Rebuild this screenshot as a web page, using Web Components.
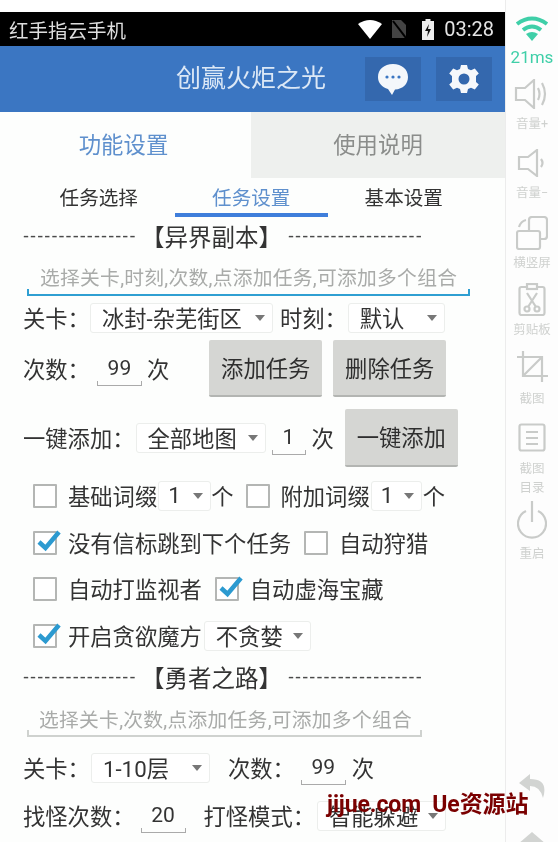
<!DOCTYPE html>
<html lang="zh"><head><meta charset="utf-8"><title>创赢火炬之光</title>
<style>
html,body{margin:0;padding:0;background:#fff}
body{width:558px;height:842px;overflow:hidden;font-family:Roboto,"Noto Sans CJK SC",sans-serif;color:#333}
x-row>span{margin-bottom:2px}
</style></head><body>
<x-app>
  <x-status>红手指云手机</x-status>
  <x-title>创赢火炬之光</x-title>
  <x-tabs></x-tabs>
  <x-subtabs></x-subtabs>

  <x-heading left="----------------" right="-------------------">【异界副本】</x-heading>
  <x-hint style="--h:39px;--line:#2f9fd2;--lw:443px;--pad:13px;--lh:2.5px;--mb:1px;--tl:44px">选择关卡,时刻,次数,点添加任务,可添加多个组合</x-hint>
  <x-row style="height:42px">
    <span>关卡：</span>
    <x-select style="width:183px">冰封-杂芜街区</x-select>
    <span style="margin-left:7px">时刻：</span>
    <x-select style="width:97px;margin-left:1px">默认</x-select>
  </x-row>
  <x-row style="height:59px">
    <span>次数：</span>
    <x-field style="width:45px;margin-left:7px">99</x-field>
    <span style="margin-left:5px">次</span>
    <x-btn style="width:113px;margin-left:40px">添加任务</x-btn>
    <x-btn style="width:113px;margin-left:11px">删除任务</x-btn>
  </x-row>
  <x-row style="height:64px;padding-bottom:4px;margin-top:10px">
    <span>一键添加：</span>
    <x-select style="width:130px;margin-left:1px;margin-top:-1px">全部地图</x-select>
    <x-field style="width:34px;margin-left:6px">1</x-field>
    <span style="margin-left:6px">次</span>
    <x-btn style="width:113px;height:58px;margin-left:11px">一键添加</x-btn>
  </x-row>
  <x-row style="height:47px;padding-left:33px">
    <x-check>基础词缀</x-check>
    <x-select style="width:53px;margin-left:1px" narrow>1</x-select>
    <span>个</span>
    <x-check style="margin-left:12px">附加词缀</x-check>
    <x-select style="width:51px;margin-left:1px" narrow>1</x-select>
    <span style="margin-left:1px">个</span>
  </x-row>
  <x-row style="height:47px;padding-left:33px">
    <x-check checked>没有信标跳到下个任务</x-check>
    <x-check style="margin-left:13px">自动狩猎</x-check>
  </x-row>
  <x-row style="height:46px;padding-left:33px">
    <x-check>自动打监视者</x-check>
    <x-check checked style="margin-left:13px">自动虚海宝藏</x-check>
  </x-row>
  <x-row style="height:47px;padding-left:33px">
    <x-check checked>开启贪欲魔方</x-check>
    <x-select style="width:107px;margin-left:2px">不贪婪</x-select>
  </x-row>

  <x-heading style="height:38px" left="----------------" right="-------------------">【勇者之路】</x-heading>
  <x-hint style="--h:40px;--line:#cfd2cf;--lw:395px;--pad:12px;--lh:2px;--mb:1px;--tl:48px">选择关卡,次数,点添加任务,可添加多个组合</x-hint>
  <x-row style="height:48px;margin-top:7px">
    <span>关卡：</span>
    <x-select style="width:119px;margin-left:1px">1-10层</x-select>
    <span style="margin-left:18px">次数：</span>
    <x-field style="width:45px;margin-left:6px">99</x-field>
    <span style="margin-left:6px">次</span>
  </x-row>
  <x-row style="height:48px">
    <span>找怪次数：</span>
    <x-field style="width:45px;margin-left:6px">20</x-field>
    <span style="margin-left:18px">打怪模式：</span>
    <x-select style="width:129px;margin-left:2px">智能躲避</x-select>
  </x-row>
</x-app>
<script>
const FONT='Roboto,"Noto Sans CJK SC",sans-serif';
function def(name,render){
  customElements.define(name,class extends HTMLElement{
    connectedCallback(){
      if(this.shadowRoot)return;
      this.attachShadow({mode:'open'}).innerHTML=render(this);
    }
  });
}
def('x-app',()=>`<style>
:host{display:flex;position:relative;width:558px;height:842px;overflow:hidden;filter:blur(.45px)}
#phone{width:505px;height:842px;background:#fdfefd;overflow:hidden;flex:none}
.wm{position:absolute;left:327px;top:790px;font:bold 23px ${FONT};color:#7a0000;white-space:pre;letter-spacing:-.1px;line-height:30px}
</style><div id="phone"><slot></slot></div><x-side></x-side><div class="wm">jijue.com  Ue资源站</div>`);
def('x-status',()=>`<style>
:host{display:block;padding-top:12px;background:#fff}
.bar{height:34px;background:#000;display:flex;align-items:center;padding:0 11px 0 9px;color:#ddd;font-size:19.5px}
.sp{flex:1}svg{display:block}
.t{font-size:20px;margin-left:10px;color:#e4e4e4}
</style><div class="bar"><slot></slot><span class="sp"></span>
<svg width="24" height="20" viewBox="0 0 24 20"><path d="M0 5Q12-3 24 5L12 20Z" fill="#fff"/></svg>
<svg style="margin-left:10px" width="14" height="18" viewBox="0 0 14 18"><path d="M0 0H9L14 5V18H0Z" fill="#444"/><path d="M1 1L14 18" stroke="#000" stroke-width="2"/></svg>
<svg style="margin-left:16px" width="12" height="21" viewBox="0 0 12 21"><path d="M3.500 0H8.500V2H12V21H0V2H3.500Z" fill="#eee"/><path d="M7 5L3 12H6L5 18L9 10H6Z" fill="#111"/></svg>
<span class="t">03:28</span></div>`);
def('x-title',()=>`<style>
:host{display:flex;align-items:center;height:66px;background:#3b76c2;color:#dce8f6;font-size:25px;box-sizing:border-box;padding-left:176px}
.b{width:56px;height:44px;background:#3468ae;display:flex;align-items:center;justify-content:center;flex:none}
.t{width:189px;line-height:66px;flex:none}
</style><span class="t"><slot></slot></span>
<div class="b"><svg width="32" height="34" viewBox="0 0 32 34"><path d="M16 2C7 2 1 7.500 1 15C1 21 5 25 11 27L15 33L18 27.600C26 27 31 22 31 15C31 7.500 25 2 16 2Z" fill="#f4f7fb"/><circle cx="10" cy="15" r="1.600" fill="#3b76c2"/><circle cx="16" cy="15" r="1.600" fill="#3b76c2"/><circle cx="22" cy="15" r="1.600" fill="#3b76c2"/></svg></div>
<div class="b" style="margin-left:15px"><svg width="30" height="30" viewBox="-15 -15 30 30"><path fill="#f6f8fb" fill-rule="evenodd" d="M-3-14H3L4-10 7-8.700 10.800-10.600 14.800-5.600 12-3 12 3 14.800 5.600 10.800 10.600 7 8.700 4 10 3 14H-3L-4 10-7 8.700-10.800 10.600-14.800 5.600-12 3-12-3-14.800-5.600-10.800-10.600-7-8.700-4-10ZM0-5.500A5.500 5.500 0 1 0 0 5.500 5.500 5.500 0 1 0 0-5.500Z"/></svg></div>`);
def('x-tabs',()=>`<style>
:host{display:flex;height:66px;font-size:22.4px}
div{display:flex;align-items:center;justify-content:center;padding-bottom:4px;box-sizing:border-box}
.a{width:251px;color:#5f90cd;padding-right:4px;background:#fdfefd}
.b{width:254px;background:#eef0ee;color:#8b8d8b}
</style><div class="a">功能设置</div><div class="b">使用说明</div>`);
def('x-subtabs',()=>`<style>
:host{display:flex;height:39px;padding-left:22.500px;font-size:19.6px;color:#333}
div{width:152.500px;height:39px;box-sizing:border-box;text-align:center;line-height:41px}
.on{color:#5f90cd;border-bottom:4px solid #3f7edb}
</style><div>任务选择</div><div class="on">任务设置</div><div>基本设置</div>`);
def('x-heading',el=>`<style>
:host{display:flex;align-items:center;height:40px;padding:0 0 2px 23px;box-sizing:border-box;font-size:23.500px;color:#333;white-space:nowrap}
.d{font:18px/1 "Liberation Sans",sans-serif;color:#4a4a4a;letter-spacing:1.1px;flex:none}
.h{width:153px;text-align:center;flex:none}
.l{width:112px;flex:none}
</style><span class="d l">${el.getAttribute('left')}</span><span class="h"><slot></slot></span><span class="d">${el.getAttribute('right')}</span>`);
def('x-hint',()=>`<style>
:host{display:block;height:var(--h);margin:0 0 var(--mb) 27px;position:relative}
.w{height:100%;box-sizing:border-box;width:var(--lw);border:solid var(--line);border-width:0 0 var(--lh);padding-left:var(--pad);font-size:19.800px;letter-spacing:.25px;color:#a9aba9;white-space:nowrap;line-height:var(--tl);position:relative}
.w::before,.w::after{content:"";position:absolute;bottom:0;width:2px;height:5px;background:var(--line)}
.w::before{left:0}.w::after{right:0}
</style><div class="w"><slot></slot></div>`);
def('x-row',()=>`<style>
:host{display:flex;align-items:center;padding-left:23px;font-size:22.3px;color:#333;white-space:nowrap;box-sizing:border-box}
</style><slot></slot>`);
def('x-select',()=>`<style>
:host{display:flex;align-items:center;height:30px;box-sizing:border-box;border:1px solid #eceeec;border-radius:3px;background:#fff;flex:none;position:relative;padding:0 0 2px 11px;font-size:22.3px;color:#333}
:host([narrow]){padding-left:9px}
.c{position:absolute;right:7px;top:50%;margin-top:-3px;width:0;height:0;border:solid transparent;border-width:6px 5.500px 0;border-top-color:#777}
</style><slot></slot><span class="c"></span>`);
def('x-field',()=>`<style>
:host{display:block;position:relative;height:34px;line-height:32px;text-align:center;font-size:21px;color:#333;flex:none;box-sizing:border-box;border-bottom:1px solid #aaa}
:host::before,:host::after{content:"";position:absolute;bottom:0;width:1px;height:4px;background:#aaa}
:host::before{left:0}:host::after{right:0}
</style><slot></slot>`);
def('x-btn',()=>`<style>
:host{display:flex;align-items:center;justify-content:center;height:57px;padding-bottom:2px;background:#d5d6d3;border-bottom:2px solid #b3b5b2;border-radius:2px;box-sizing:border-box;font-size:22.3px;color:#2e2e2e;flex:none}
</style><slot></slot>`);
def('x-check',el=>`<style>
:host{display:flex;align-items:center;flex:none}
.b{width:24px;height:24px;box-sizing:border-box;border:2px solid #b4b6b4;border-radius:1px;position:relative;margin-right:11px;background:#fff}
.t{margin-bottom:2px}
svg{position:absolute;left:1px;top:-4px;overflow:visible}
</style><span class="b">${el.hasAttribute('checked')?'<svg width="26" height="24" viewBox="0 0 26 24"><path d="M3 13L9.500 19L23 3" fill="none" stroke="#2c9ad0" stroke-width="4.500"/></svg>':''}</span><span class="t"><slot></slot></span>`);
const S='fill="none" stroke="#c9cbc9" stroke-width="2.2"';
def('x-side',()=>`<style>
:host{display:flex;flex-direction:column;align-items:center;width:53px;height:842px;box-sizing:border-box;background:#fdfdfd;border-left:1px solid #ececec;font-size:12.500px;color:#cfd1cf;text-align:center;line-height:19px;flex:none;overflow:hidden}
svg{display:block;flex:none}
.ms{font-size:17px;color:#3fcfa8;line-height:22px;white-space:nowrap;margin-top:5px}
</style>
<svg style="margin-top:16px" width="34" height="25" viewBox="0 0 34 25"><g fill="none" stroke="#3fcfa8" stroke-width="4"><path d="M2 8Q17-3 32 8"/><path d="M8 14Q17 7 26 14"/></g><path d="M11 18Q17 14 23 18L17 25Z" fill="#3fcfa8"/></svg>
<div class="ms">21ms</div>
<svg style="margin-top:11px" width="36" height="30" viewBox="0 0 36 30" ${S}><path d="M2 9H11L20 1V29L11 21H2Z"/><path d="M24 9Q27 15 24 21M28 4Q34 15 28 26"/></svg>
<div style="margin-top:5px">音量+</div>
<svg style="margin-top:16px" width="32" height="28" viewBox="0 0 32 28" ${S}><path d="M3 8H12L21 1V27L12 20H3Z"/><path d="M25 10Q28 14 25 18"/></svg>
<div style="margin-top:6px">音量−</div>
<svg style="margin-top:14px" width="32" height="34" viewBox="0 0 32 34" ${S}><rect x="1" y="15" width="23" height="18" rx="2"/><path d="M13 14V4Q13 1 16 1H28Q31 1 31 4V20Q31 23 28 23H25M3 11Q5 5 10 4"/></svg>
<div style="margin-top:3px;white-space:nowrap">横竖屏</div>
<svg style="margin-top:11px" width="28" height="33" viewBox="0 0 28 33" ${S}><rect x="1.500" y="4" width="25" height="28" rx="2"/><rect x="9" y="1" width="10" height="5" fill="#fdfdfd"/><path d="M9 10L18 24M19 10L10 24"/><circle cx="9" cy="26" r="2.500"/><circle cx="19" cy="26" r="2.500"/></svg>
<div style="margin-top:4px;white-space:nowrap">剪贴板</div>
<svg style="margin-top:11px" width="32" height="32" viewBox="0 0 32 32" ${S}><path d="M7 1V26H32M1 7H26V32M7 26L26 7"/></svg>
<div style="margin-top:7px">截图</div>
<svg style="margin-top:15px" width="28" height="29" viewBox="0 0 28 29" ${S}><rect x="1.500" y="1.500" width="25" height="26" rx="2"/><path d="M8 9H20M8 15H20M8 21H20"/></svg>
<div style="margin-top:7px">截图<br>目录</div>
<svg style="margin-top:3px" width="30" height="40" viewBox="0 0 30 40" ${S}><path d="M9 11A14 14 0 1 0 21 11M15 1V22"/></svg>
<div style="margin-top:4px">重启</div>
<svg style="margin-top:210px" width="30" height="26" viewBox="0 0 30 26"><path d="M13 1L2 10L13 18V13Q23 13 26 25Q32 6 13 6Z" fill="#d2d4d2"/></svg>
<svg style="margin-top:33px" width="30" height="26" viewBox="0 0 30 26"><path d="M15 0L1 12H29Z" fill="#d2d4d2"/></svg>
`);
</script>
</body></html>
